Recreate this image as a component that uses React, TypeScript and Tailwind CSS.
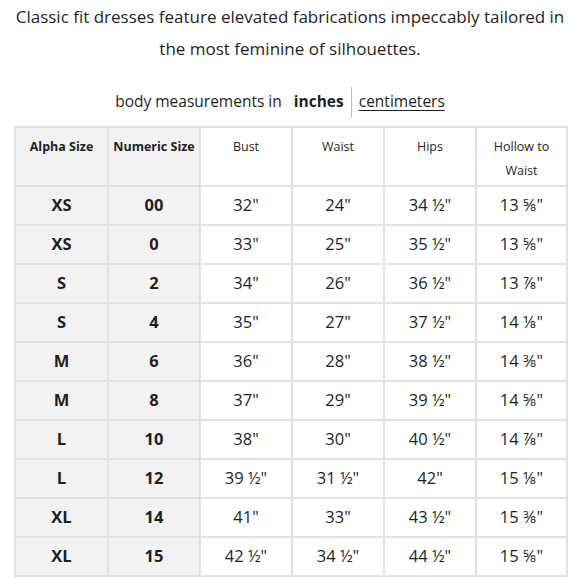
import React from 'react';

const rows: [string, string, string, string, string, string][] = [
  ['XS', '00', '32"', '24"', '34 ½"', '13 ⅝"'],
  ['XS', '0', '33"', '25"', '35 ½"', '13 ⅝"'],
  ['S', '2', '34"', '26"', '36 ½"', '13 ⅞"'],
  ['S', '4', '35"', '27"', '37 ½"', '14 ⅛"'],
  ['M', '6', '36"', '28"', '38 ½"', '14 ⅜"'],
  ['M', '8', '37"', '29"', '39 ½"', '14 ⅝"'],
  ['L', '10', '38"', '30"', '40 ½"', '14 ⅞"'],
  ['L', '12', '39 ½"', '31 ½"', '42"', '15 ⅛"'],
  ['XL', '14', '41"', '33"', '43 ½"', '15 ⅜"'],
  ['XL', '15', '42 ½"', '34 ½"', '44 ½"', '15 ⅝"'],
];

export default function App() {
  return (
    <div className="w-[580px] h-[580px] bg-white text-[#1f1f1f] overflow-hidden" style={{ fontFamily: '"Open Sans", Lato, sans-serif' }}>
      <p className="text-center text-[17px] leading-[32px] pt-[1px]">
        Classic fit dresses feature elevated fabrications impeccably tailored in
        <br />
        the most feminine of silhouettes.
      </p>

      <div className="flex justify-center items-center mt-[22px] h-[30px] text-[15.5px] pr-[20px]">
        <span>body measurements in</span>
        <span className="font-bold ml-[12px]">inches</span>
        <span className="w-px h-[30px] bg-[#bbb] mx-[7px]" />
        <span className="underline underline-offset-[3px]">centimeters</span>
      </div>

      <table className="table-fixed border-collapse w-[552px] ml-[14px] mt-[9px] border-2 border-[#e2e2e2]">
        <colgroup>
          <col className="w-[93px]" />
          <col className="w-[92px]" />
          <col className="w-[92px]" />
          <col className="w-[92px]" />
          <col className="w-[92px]" />
          <col className="w-[91px]" />
        </colgroup>
        <thead>
          <tr className="h-[59px] text-[12.5px] leading-[24px]">
            <th className="align-top pt-[7px] font-bold bg-[#f2f2f2] border-2 border-[#e2e2e2] whitespace-nowrap">Alpha Size</th>
            <th className="align-top pt-[7px] font-bold bg-[#f2f2f2] border-2 border-[#e2e2e2] whitespace-nowrap">Numeric Size</th>
            <th className="align-top pt-[7px] font-normal border-2 border-[#e2e2e2]">Bust</th>
            <th className="align-top pt-[7px] font-normal border-2 border-[#e2e2e2]">Waist</th>
            <th className="align-top pt-[7px] font-normal border-2 border-[#e2e2e2]">Hips</th>
            <th className="align-top pt-[7px] font-normal border-2 border-[#e2e2e2] px-3">Hollow to Waist</th>
          </tr>
        </thead>
        <tbody>
          {rows.map((r, i) => (
            <tr key={i} className="h-[39px] text-[16.5px]">
              <td className="text-center font-bold bg-[#f2f2f2] border-2 border-[#e2e2e2]">{r[0]}</td>
              <td className="text-center font-bold bg-[#f2f2f2] border-2 border-[#e2e2e2]">{r[1]}</td>
              <td className="text-center border-2 border-[#e2e2e2]">{r[2]}</td>
              <td className="text-center border-2 border-[#e2e2e2]">{r[3]}</td>
              <td className="text-center border-2 border-[#e2e2e2]">{r[4]}</td>
              <td className="text-center border-2 border-[#e2e2e2]">{r[5]}</td>
            </tr>
          ))}
        </tbody>
      </table>
    </div>
  );
}
